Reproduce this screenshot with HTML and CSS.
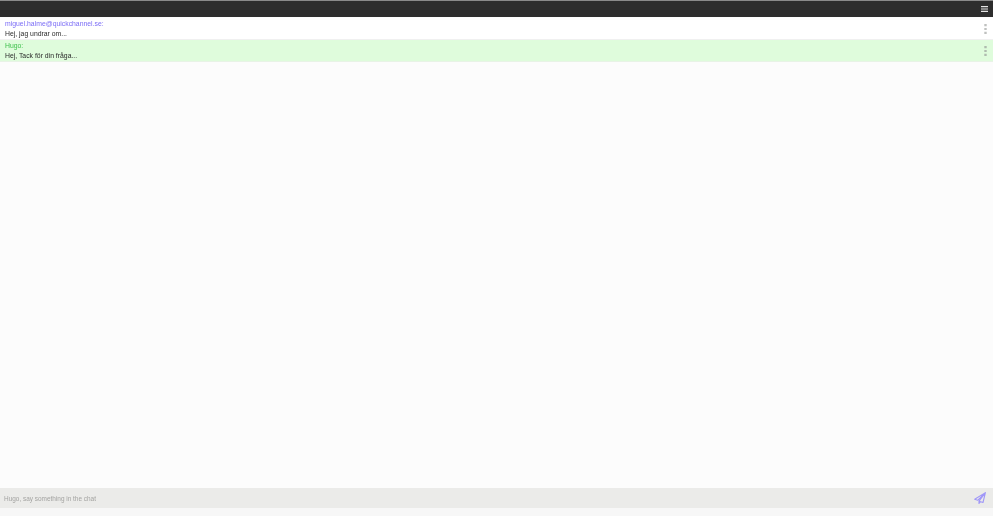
FILE: index.html
```html
<!DOCTYPE html>
<html lang="sv">
<head>
<meta charset="utf-8">
<title>Chat</title>
<link rel="stylesheet" href="styles.css">
</head>
<body>
<div class="app">
  <header class="topbar">
    <svg class="icon" width="7" height="6" viewBox="0 0 7 6"><path d="M0 .7h7M0 3h7M0 5.3h7" stroke="#e4e4e4" stroke-width="1.2" fill="none"/></svg>
  </header>
  <main class="messages">
    <div class="message">
      <div class="message-body">
        <div class="author author-guest">miguel.halme@quickchannel.se:</div>
        <div class="text">Hej, jag undrar om...</div>
      </div>
      <svg class="icon" width="3" height="10" viewBox="0 0 3 10"><path d="M.3 0h2.4v2.2H.3zM.3 3.9h2.4v2.2H.3zM.3 7.8h2.4V10H.3z" fill="#bfc1bf"/></svg>
    </div>
    <div class="message message-own">
      <div class="message-body">
        <div class="author author-own">Hugo:</div>
        <div class="text">Hej, Tack för din fråga...</div>
      </div>
      <svg class="icon" width="3" height="10" viewBox="0 0 3 10"><path d="M.3 0h2.4v2.2H.3zM.3 3.9h2.4v2.2H.3zM.3 7.8h2.4V10H.3z" fill="#aebcae"/></svg>
    </div>
  </main>
  <footer class="composer">
    <span class="placeholder">Hugo, say something in the chat</span>
    <svg class="icon" width="12" height="12" viewBox="0 0 12 12"><path d="M11.4.6.7 7.2l3 1.1L11.4.6 5 9.2l4 1.3L11.4.6ZM5 9.2v2.2l1.5-1.7" fill="none" stroke="#a097f8" stroke-width="1.1" stroke-linejoin="round"/></svg>
  </footer>
</div>
</body>
</html>
```
FILE: styles.css
```css
html, body {
  margin: 0;
  height: 100%;
  background: #ffffff;
}
.app {
  width: 993px;
  height: 516px;
  display: flex;
  flex-direction: column;
  background: #fcfcfc;
  font-family: "Liberation Sans", Arial, sans-serif;
  overflow: hidden;
}
.topbar {
  height: 17px;
  flex: none;
  background: #2d2d2d;
  border-top: 1px solid #8a8a8a;
  box-sizing: border-box;
  display: flex;
  align-items: center;
  justify-content: flex-end;
  padding-right: 5px;
}
.messages {
  flex: 1;
  min-height: 0;
  padding-top: 1px;
}
.message {
  height: 22px;
  box-sizing: border-box;
  display: flex;
  align-items: center;
  justify-content: space-between;
  padding: 0 6px 0 5px;
  background: #ffffff;
  border-bottom: 1px solid #f0f0f0;
}
.message-own {
  padding-top: 1px;
  background: #dffcdc;
  border-bottom-color: #e8f3e6;
}
.message-body {
  display: flex;
  flex-direction: column;
}
.author, .text {
  font-size: 6.85px;
  line-height: 10px;
  filter: blur(0.4px);
}
.author-guest { color: #7a6cf6; }
.author-own { color: #3fc04c; }
.text { color: #2a2a2a; }
.composer {
  height: 20px;
  margin-bottom: 8px;
  flex: none;
  background: #ebebe9;
  display: flex;
  align-items: center;
  justify-content: space-between;
  padding: 0 7px 0 4px;
  box-shadow: 0 8px 0 #f7f7f7;
}
.placeholder {
  font-size: 6.45px;
  color: #a3a3a1;
  filter: blur(0.4px);
}
.icon {
  filter: blur(0.4px);
}
```
